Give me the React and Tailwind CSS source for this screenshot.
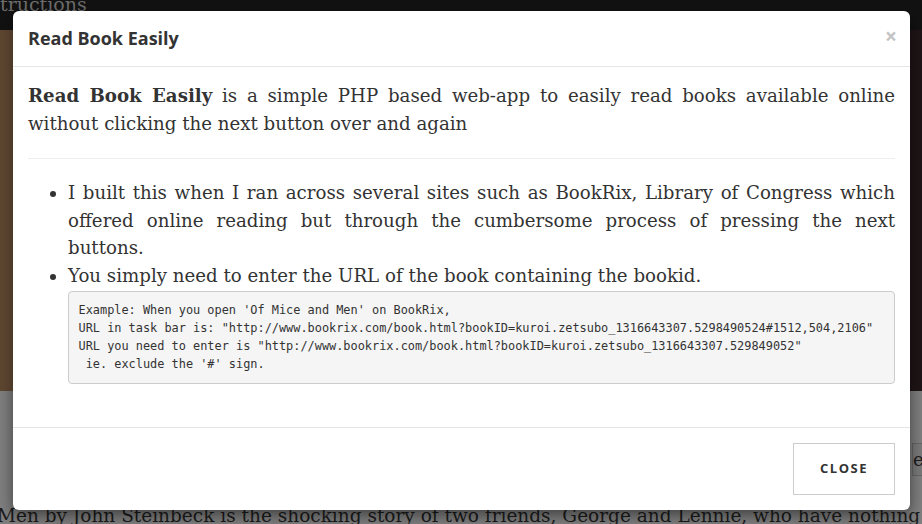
import React from "react";

const serif = "font-['DejaVu_Serif',serif]";

function Line({ children, last }) {
  return (
    <span className={last ? "block" : "block text-justify [text-align-last:justify]"}>
      {children}
    </span>
  );
}

export default function App() {
  return (
    <div className="relative w-[922px] h-[524px] overflow-hidden bg-[#7f7f7f]">
      {/* page behind the overlay */}
      <div className="flex flex-col h-full">
        <div className="h-[30px] bg-[#121212] overflow-hidden">
          <div className={`${serif} text-[19px] leading-[20px] -mt-[6px] text-[#6e6e6e]`}>tructions</div>
        </div>
        <div className="h-[361px] bg-[linear-gradient(90deg,#5e4630_0%,#6a5038_3%,#4a3528_40%,#2c1d20_80%,#1f1417_100%)]" />
        <div className="relative flex-1">
          <div className="absolute right-0 top-[52px] w-[10px] h-[33px] border-y border-l border-[#666] bg-[#7a7a7a] overflow-hidden">
            <span className={`${serif} text-[18px] leading-[31px] text-[#1d1d1d] block whitespace-nowrap`}>er</span>
          </div>
          <div className={`absolute left-[-3px] top-[111px] whitespace-nowrap ${serif} text-[18.5px] leading-[28px] text-[#1b1b1b]`}>
            Men by John Steinbeck is the shocking story of two friends, George and Lennie, who have nothing to lose
          </div>
        </div>
      </div>

      {/* modal */}
      <div className="absolute left-[13px] top-[11px] w-[897px] h-[499px] bg-white rounded-[6px] shadow-[0_5px_15px_rgba(0,0,0,0.5)] flex flex-col">
        <div className="h-[56px] border-b border-[#e5e5e5] flex items-center justify-between pl-[15px] pr-[15px]">
          <h4 className="font-['Open_Sans',sans-serif] font-bold text-[18px] text-[#333] leading-[20px] mt-[-1px]">Read Book Easily</h4>
          <span className="font-['Open_Sans',sans-serif] font-bold text-[21px] leading-[20px] text-[#c4c4c4] mr-[-2px] mt-[-6px]">×</span>
        </div>
        <div className={`px-[15px] pt-[15px] ${serif} text-[18.2px] text-[#333]`}>
          <p className="leading-[28px] mb-[20px]">
            <Line><b>Read Book Easily</b> is a simple PHP based web-app to easily read books available online</Line>
            <Line last>without clicking the next button over and again</Line>
          </p>
          <hr className="border-t border-[#eeeeee] mb-[20px]" />
          <ul className="list-disc pl-[40px] leading-[27.7px] marker:text-[#333]">
            <li>
              <Line>I built this when I ran across several sites such as BookRix, Library of Congress which</Line>
              <Line>offered online reading but through the cumbersome process of pressing the next</Line>
              <Line last>buttons.</Line>
            </li>
            <li>
              You simply need to enter the URL of the book containing the bookid.
              <pre className="mt-[1px] mb-[10px] p-[9.5px] bg-[#f5f5f5] border border-[#cccccc] rounded-[4px] font-['DejaVu_Sans_Mono',monospace] text-[11.9px] leading-[18px] text-[#333]">{`Example: When you open 'Of Mice and Men' on BookRix,
URL in task bar is: "http://www.bookrix.com/book.html?bookID=kuroi.zetsubo_1316643307.5298490524#1512,504,2106"
URL you need to enter is "http://www.bookrix.com/book.html?bookID=kuroi.zetsubo_1316643307.529849052"
 ie. exclude the '#' sign.
`}</pre>
            </li>
          </ul>
        </div>
        <div className="mt-auto border-t border-[#e5e5e5] p-[15px] flex justify-end">
          <button className="w-[102px] h-[52px] border border-[#cccccc] bg-white font-['Open_Sans',sans-serif] font-bold text-[13px] tracking-[1.5px] text-[#333]">
            CLOSE
          </button>
        </div>
      </div>
    </div>
  );
}
